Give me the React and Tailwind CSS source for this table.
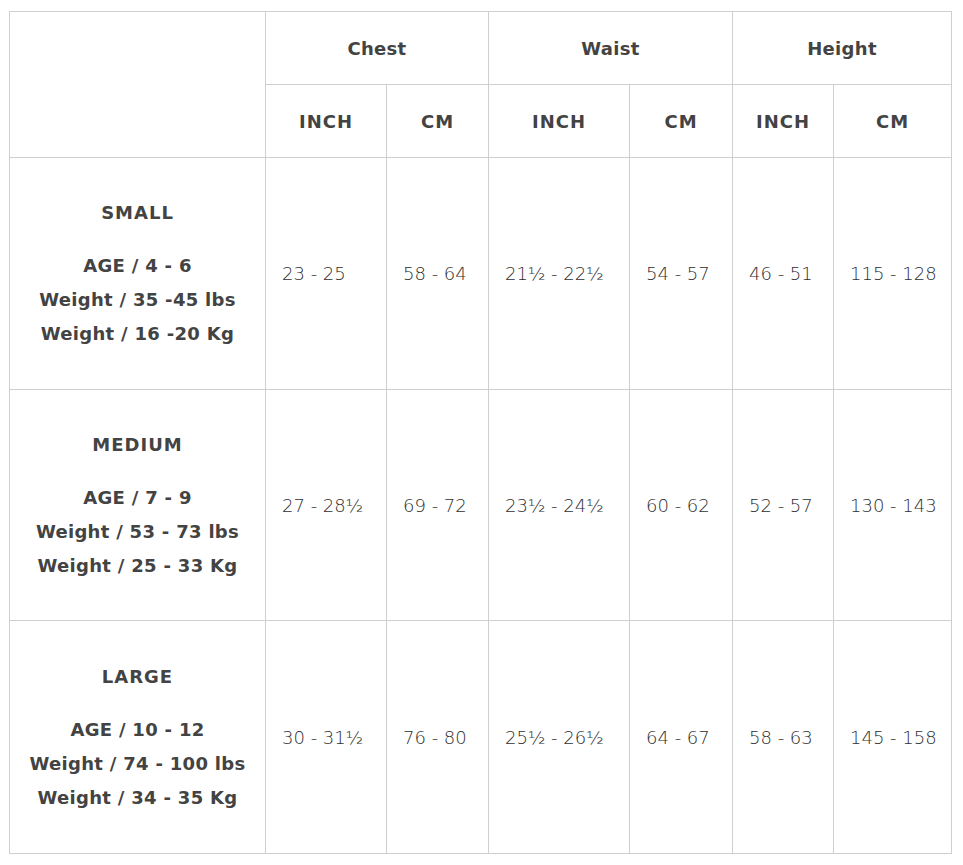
import React from "react";

const rows = [
  {
    size: "SMALL",
    lines: ["AGE / 4 - 6", "Weight / 35 -45 lbs", "Weight / 16 -20 Kg"],
    vals: ["23 - 25", "58 - 64", "21½ - 22½", "54 - 57", "46 - 51", "115 - 128"],
    h: "h-[232px]",
  },
  {
    size: "MEDIUM",
    lines: ["AGE / 7 - 9", "Weight / 53 - 73 lbs", "Weight / 25 - 33 Kg"],
    vals: ["27 - 28½", "69 - 72", "23½ - 24½", "60 - 62", "52 - 57", "130 - 143"],
    h: "h-[231px]",
  },
  {
    size: "LARGE",
    lines: ["AGE / 10 - 12", "Weight / 74 - 100 lbs", "Weight / 34 - 35 Kg"],
    vals: ["30 - 31½", "76 - 80", "25½ - 26½", "64 - 67", "58 - 63", "145 - 158"],
    h: "h-[233px]",
  },
];

const bold = "font-['DejaVu_Sans',sans-serif] font-bold text-[18px] text-[#434343] tracking-[0.3px]";
const light = "font-['DejaVu_Sans',sans-serif] font-extralight text-[18px] text-[#2e2e2e]";

export default function App() {
  return (
    <div className="bg-white min-h-[865px] pt-[11px] pl-[9px]">
      <table className="table-fixed border-collapse w-[942px]">
        <colgroup>
          <col className="w-[256px]" />
          <col className="w-[121px]" />
          <col className="w-[102px]" />
          <col className="w-[141px]" />
          <col className="w-[103px]" />
          <col className="w-[101px]" />
          <col className="w-[118px]" />
        </colgroup>
        <thead>
          <tr className="h-[73px]">
            <th rowSpan={2} className="border border-[#cfcfcf]"></th>
            <th colSpan={2} className={`border border-[#cfcfcf] text-center align-middle ${bold}`}>Chest</th>
            <th colSpan={2} className={`border border-[#cfcfcf] text-center align-middle ${bold}`}>Waist</th>
            <th colSpan={2} className={`border border-[#cfcfcf] text-center align-middle ${bold}`}>Height</th>
          </tr>
          <tr className="h-[73px]">
            {["INCH", "CM", "INCH", "CM", "INCH", "CM"].map((t, i) => (
              <th key={i} className={`border border-[#cfcfcf] text-center align-middle ${bold} tracking-[1px]`}>{t}</th>
            ))}
          </tr>
        </thead>
        <tbody>
          {rows.map((r) => (
            <tr key={r.size} className={r.h}>
              <td className={`border border-[#cfcfcf] text-center align-middle ${bold}`}>
                <div className="tracking-[1px] leading-[34px] mb-[19px]">{r.size}</div>
                {r.lines.map((l) => (
                  <div key={l} className="leading-[34px]">{l}</div>
                ))}
              </td>
              {r.vals.map((v, i) => (
                <td key={i} className={`border border-[#cfcfcf] align-middle pl-[16px] ${light}`}>{v}</td>
              ))}
            </tr>
          ))}
        </tbody>
      </table>
    </div>
  );
}
